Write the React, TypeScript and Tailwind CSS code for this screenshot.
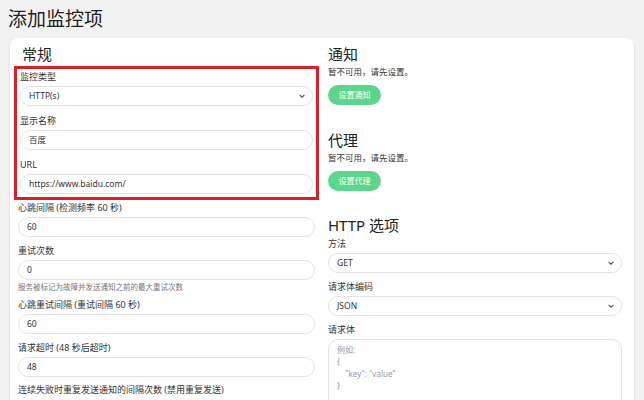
const font = { fontFamily: '"Noto Sans", "Noto Sans CJK SC", sans-serif' };

function Chevron() {
  return (
    <svg width="8" height="8" viewBox="0 0 10 10" className="text-gray-600">
      <path d="M2 3.5 L5 6.5 L8 3.5" fill="none" stroke="currentColor" strokeWidth="1.4" />
    </svg>
  );
}

function Field({ label, value, select, hint, mt = 'mt-[4px]' }: { label: string; value: string; select?: boolean; hint?: string; mt?: string }) {
  return (
    <div className={mt}>
      <div className="text-[9px] leading-[12px] text-[#333]">{label}</div>
      <div className="mt-[3px] h-[20px] rounded-full border border-[#e3e3e3] bg-white flex items-center justify-between pl-[8px] pr-[6px] text-[8.5px] text-[#333]">
        <span>{value}</span>
        {select && <Chevron />}
      </div>
      {hint && <div className="mt-[2px] text-[7.5px] text-[#777] leading-[10px]">{hint}</div>}
    </div>
  );
}

function Section({ title, button }: { title: string; button: string }) {
  return (
    <div>
      <div className="text-[15px] leading-[20px] text-[#222]">{title}</div>
      <div className="text-[8.5px] text-[#333] leading-[12px] mt-[2px]">暂不可用，请先设置。</div>
      <div className="mt-[7px] h-[20px] w-[53px] rounded-full bg-[#5cd68e] text-white text-[8px] flex items-center justify-center">{button}</div>
    </div>
  );
}

export default function App() {
  return (
    <div className="w-[644px] h-[400px] overflow-hidden bg-[#f2f2f2]" style={font}>
      <div className="pl-[8px] pt-[6px] text-[19px] leading-[26px] text-[#222]">添加监控项</div>
      <div className="ml-[10px] mr-[10px] mt-[6px] bg-white rounded-[8px] shadow-sm flex gap-[13px] pl-[8px] pr-[12px] pt-[6px] h-[400px]">
        <div className="w-[297px]">
          <div className="text-[15px] leading-[20px] text-[#222] ml-[4px]">常规</div>
          <div className="mt-[2px] -mx-[4px] border-[3px] border-[#d91f26] px-[3px] pb-[3px] pt-[2px]">
            <Field label="监控类型" value="HTTP(s)" select mt="mt-0" />
            <Field label="显示名称" value="百度" mt="mt-[9px]" />
            <Field label="URL" value="https://www.baidu.com/" mt="mt-[9px]" />
          </div>
          <Field label="心跳间隔 (检测频率 60 秒)" value="60" mt="mt-[2px]" />
          <Field label="重试次数" value="0" hint="服务被标记为故障并发送通知之前的最大重试次数" mt="mt-[8px]" />
          <Field label="心跳重试间隔 (重试间隔 60 秒)" value="60" mt="mt-[7px]" />
          <Field label="请求超时 (48 秒后超时)" value="48" mt="mt-[8px]" />
          <div className="mt-[7px] text-[9px] leading-[12px] text-[#333]">连续失败时重复发送通知的间隔次数 (禁用重复发送)</div>
        </div>
        <div className="flex-1">
          <Section title="通知" button="设置通知" />
          <div className="mt-[25px]"><Section title="代理" button="设置代理" /></div>
          <div className="mt-[24px] text-[15px] leading-[20px] text-[#222]">HTTP 选项</div>
          <Field label="方法" value="GET" select mt="mt-[3px]" />
          <Field label="请求体编码" value="JSON" select mt="mt-[8px]" />
          <div className="mt-[8px] text-[9px] leading-[12px] text-[#333]">请求体</div>
          <div className="mt-[3px] h-[70px] rounded-[10px] border border-[#e3e3e3] px-[8px] pt-[4px] text-[8px] leading-[12px] text-[#999] whitespace-pre">
            {'例如:\n{\n    "key": "value"\n}'}
          </div>
        </div>
      </div>
    </div>
  );
}
